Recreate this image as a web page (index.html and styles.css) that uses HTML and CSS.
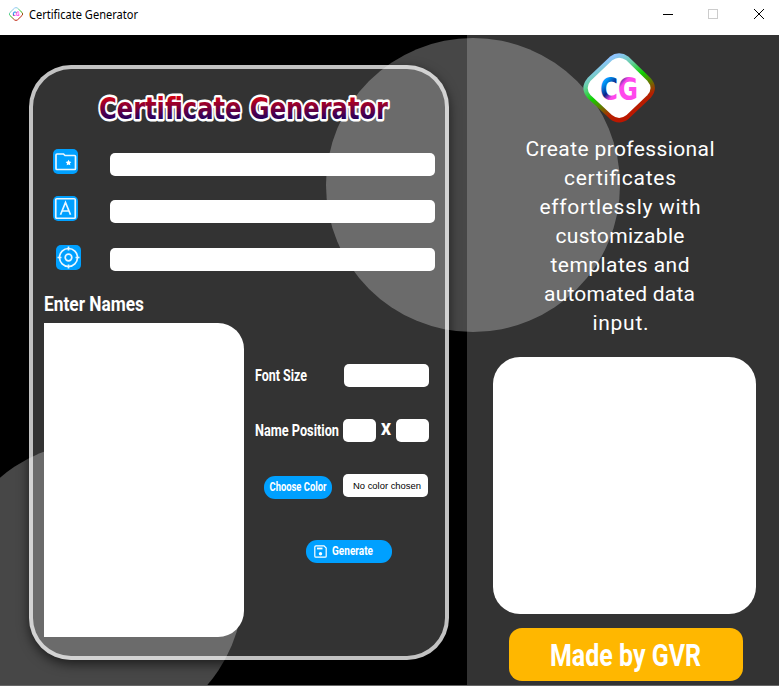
FILE: index.html
```html
<!DOCTYPE html>
<html lang="en">
<head>
<meta charset="utf-8">
<title>Certificate Generator</title>
<link rel="stylesheet" href="styles.css">
</head>
<body>
<header class="titlebar">
  <svg class="app-icon" width="14" height="14" viewBox="0 0 74 72"><path d="M29 5Q37-1 45 5L69 28Q76 36 69 44L45 67Q37 73 29 67L5 44Q-2 36 5 28Z" fill="#fff" stroke="url(#ring)" stroke-width="5"/><text class="logo-text" x="18" y="47" textLength="38" lengthAdjust="spacingAndGlyphs" fill="url(#ink)">CG</text></svg>
  <svg class="text window-name" width="109" height="18"><text x="0" y="13" textLength="109" lengthAdjust="spacingAndGlyphs">Certificate Generator</text></svg>
  <svg class="controls" width="102" height="12" fill="none" shape-rendering="crispEdges"><path d="M0 6.5h10" stroke="#000"/><path d="M45.500 1.500h9v9h-9z" stroke="#ccc"/><path d="M91 1l10 10M101 1L91 11" stroke="#000" shape-rendering="auto"/></svg>
</header>
<main class="app">
  <div class="circle circle-top"></div>
  <div class="circle circle-bottom"></div>
  <section class="form-side">
    <div class="panel">
      <svg class="text heading" width="296" height="38">
        <defs><linearGradient id="title-fill" gradientUnits="userSpaceOnUse" x1="0" y1="6" x2="0" y2="29"><stop stop-color="#d60010"/><stop offset="1" stop-color="#240060"/></linearGradient></defs>
        <text x="3" y="29" textLength="289" lengthAdjust="spacingAndGlyphs">Certificate Generator</text>
      </svg>
      <div class="fields">
        <div class="field">
          <svg class="field-icon" width="25" height="25"><path d="M3 19V6Q3 5 4 5h6.500l1.500 1.500H21.500q1 0 1 1V19.500q0 1-1 1H4q-1 0-1-1Z"/><path class="solid" d="M15.500 10.800l.9 1.800 2 .3-1.400 1.400.3 2-1.800-.9-1.800.9.3-2-1.400-1.400 2-.3Z"/></svg>
          <div class="input wide"></div>
        </div>
        <div class="field">
          <svg class="field-icon" width="25" height="25"><rect x="2.750" y="2.750" width="19.500" height="19.500" rx="1"/><path d="M7.500 18.700L12.500 6.500 17.500 18.700M9.200 15h6.600"/></svg>
          <div class="input wide"></div>
        </div>
        <div class="field target">
          <svg class="field-icon" width="25" height="25"><circle cx="12.500" cy="12.500" r="9"/><circle cx="12.500" cy="12.500" r="3.300"/><path d="M12.500 1.500v4M12.500 19.500v4M1.500 12.500h4M19.500 12.500h4"/></svg>
          <div class="input wide"></div>
        </div>
      </div>
      <svg class="text names-label" width="102" height="24"><text x="0" y="18" textLength="100" lengthAdjust="spacingAndGlyphs">Enter Names</text></svg>
      <div class="workspace">
        <div class="names-box"></div>
        <div class="options">
          <div class="option"><svg class="text label" width="88" height="23"><text x="0" y="17" textLength="52" lengthAdjust="spacingAndGlyphs">Font Size</text></svg><div class="input size-input"></div></div>
          <div class="option"><svg class="text label" width="88" height="23"><text x="0" y="17" textLength="84" lengthAdjust="spacingAndGlyphs">Name Position</text></svg><div class="input coordinate"></div><svg class="text by" width="20" height="23"><text x="5" y="16" textLength="10" lengthAdjust="spacingAndGlyphs">X</text></svg><div class="input coordinate"></div></div>
          <div class="option color-option"><div class="button choose"><svg class="text button-text" width="57" height="23"><text x="0.500" y="15" textLength="57" lengthAdjust="spacingAndGlyphs">Choose Color</text></svg></div><div class="input color-value"><svg class="text" width="68" height="23"><text x="0" y="15" textLength="68" lengthAdjust="spacingAndGlyphs">No color chosen</text></svg></div></div>
          <div class="button generate"><svg width="13" height="13" fill="none" stroke="#fff" stroke-width="1.200"><path d="M2 .8h8L12.200 3v8.200q0 1-1 1H2q-1.200 0-1.200-1V2Q.8.8 2 .8Z"/><path d="M3 3.500h5.500" stroke-width="1.800"/><circle cx="6.500" cy="8.700" r="1.700" fill="#fff" stroke="none"/></svg><svg class="text button-text" width="41" height="23"><text x="0" y="15" textLength="41" lengthAdjust="spacingAndGlyphs">Generate</text></svg></div>
        </div>
      </div>
    </div>
  </section>
  <aside class="info">
    <svg class="logo" width="74" height="72" viewBox="0 0 74 72">
      <defs>
        <linearGradient id="ring" x1=".2" y1="0" x2=".75" y2="1"><stop offset=".1" stop-color="#8fc4ff"/><stop offset=".28" stop-color="#69cfa8"/><stop offset=".48" stop-color="#10d000"/><stop offset=".78" stop-color="#b52000"/><stop offset="1" stop-color="#c01000"/></linearGradient>
        <linearGradient id="ink" gradientUnits="userSpaceOnUse" x1="20" y1="25" x2="45" y2="47"><stop offset=".15" stop-color="#009dff"/><stop offset=".43" stop-color="#082486"/><stop offset=".62" stop-color="#ff48ec"/></linearGradient>
      </defs>
      <path d="M29 6.500Q37 .5 45.500 6.500L67 27.500Q74.500 36 67 44.500L45.500 65Q37 71.500 29 65L7 44.500Q0 36 7 27.500Z" fill="#fff" stroke="url(#ring)" stroke-width="4.200"/>
      <text class="logo-text" x="18" y="47.500" textLength="38" lengthAdjust="spacingAndGlyphs" fill="url(#ink)">CG</text>
    </svg>
    <svg class="text description" width="200" height="203">
      <text x="5.500" y="21" textLength="189">Create professional</text>
      <text x="44" y="50" textLength="112">certificates</text>
      <text x="19.500" y="79" textLength="161">effortlessly with</text>
      <text x="35.500" y="108" textLength="129">customizable</text>
      <text x="30.500" y="137" textLength="139">templates and</text>
      <text x="24" y="166" textLength="151">automated data</text>
      <text x="72.500" y="195" textLength="56">input.</text>
    </svg>
    <div class="preview"></div>
    <div class="credit"><svg class="text" width="150" height="53"><text x="0" y="38" textLength="151" lengthAdjust="spacingAndGlyphs">Made by GVR</text></svg></div>
  </aside>
</main>
</body>
</html>
```
FILE: styles.css
```css
* { box-sizing: border-box; }
body { margin: 0; width: 779px; height: 686px; overflow: hidden; background: #000; font-family: Roboto, "Liberation Sans", sans-serif; }
svg { display: block; flex-shrink: 0; }
.text { overflow: visible; fill: #fff; }
.titlebar { height: 35px; background: #fff; display: flex; align-items: flex-start; padding: 7px 14px 0 9px; }
.window-name { margin: -1px 0 0 6px; fill: #000; font: 12px "Noto Sans", sans-serif; }
.controls { margin: 1px 0 0 auto; }
.app { position: relative; height: 651px; overflow: hidden; display: grid; grid-template-columns: 467px 312px; border-bottom: 1px solid #666; }
.circle { position: absolute; width: 294px; height: 294px; border-radius: 50%; background: rgba(255,255,255,.28); }
.circle-top { left: 326px; top: 3px; }
.circle-bottom { left: -51.5px; top: 407px; }
.form-side { position: relative; padding: 30px 18px 25px 29px; }
.panel { height: 595px; border: 4px solid rgba(255,255,255,.7); border-radius: 42px; background: rgba(255,255,255,.2); box-shadow: 0 4px 12px rgba(0,0,0,.6); padding: 21px 10px 0 11px; }
.heading { margin-left: 52px; font: 700 31px "DejaVu Sans", sans-serif; }
.heading text { fill: url(#title-fill); stroke: #fff; stroke-width: 5px; stroke-linejoin: round; paint-order: stroke; }
.fields { padding: 21px 0 0 9px; display: flex; flex-direction: column; gap: 20px; }
.field { display: flex; height: 27px; gap: 32px; }
.target { height: 28px; padding: 2px 0 0 3px; gap: 29px; }
.field-icon { background: #00a0ff; border-radius: 5px; fill: none; stroke: #e7f6ff; stroke-width: 1.7px; }
.field-icon .solid { fill: #fff; stroke: none; }
.input { background: #fff; border-radius: 5px; height: 23px; }
.wide { width: 325px; margin-top: 4px; }
.target .wide { margin-top: 3px; }
.names-label { margin-top: 22px; font: 700 21px Roboto, sans-serif; }
.workspace { display: flex; gap: 11px; margin-top: 6px; }
.names-box { width: 200px; height: 314px; background: #fff; border-radius: 0 26px 26px 0; }
.options { padding-top: 41px; width: 175px; }
.option { display: flex; margin-bottom: 32px; }
.label { font: 700 16px Roboto, sans-serif; }
.by { font: 900 16px Roboto, sans-serif; }
.size-input { width: 85px; margin-left: 1px; }
.coordinate { width: 33px; }
.button { height: 23px; border-radius: 11px; background: #00a0ff; display: flex; align-items: center; }
.button-text { font: 700 12px Roboto, sans-serif; }
.choose { width: 68px; margin: 2px 11px 0 9px; padding-left: 5px; }
.color-option { margin-bottom: 41px; }
.color-value { width: 85px; padding-left: 10px; }
.color-value .text { fill: #000; font: 9.5px "Liberation Sans", sans-serif; }
.generate { width: 86px; margin-left: 51px; padding-left: 8px; gap: 5px; }
.info { position: relative; background: rgba(255,255,255,.2); padding-top: 17px; }
.logo { margin-left: 115px; }
.logo-text { font: 700 32px "DejaVu Sans", sans-serif; }
.description { margin: 11px 0 0 53px; font: 400 21px Roboto, sans-serif; }
.preview { width: 263px; height: 257px; margin: 19px 0 14px 26px; border-radius: 27px; background: #fff; }
.credit { width: 234px; height: 53px; margin-left: 42px; border-radius: 13px; background: #ffb700; display: flex; padding-left: 41px; font: 700 31px Roboto, sans-serif; }
```
